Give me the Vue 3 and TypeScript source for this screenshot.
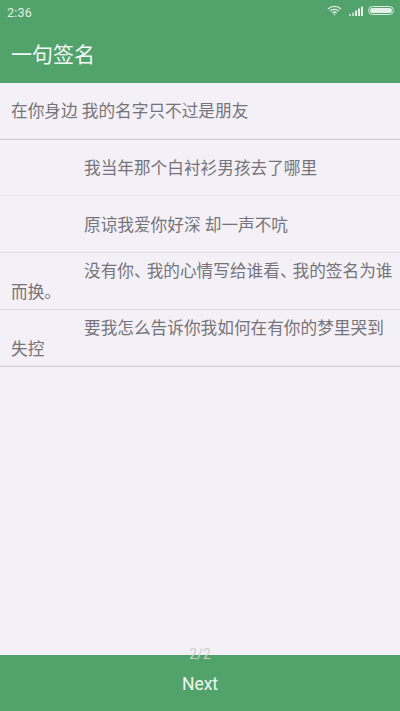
<script setup lang="ts">
interface Row { parts: string[]; indent: boolean; cls: string }
const rows: Row[] = [
  { parts: ['在你身边 我的名字只不过是朋友'], indent: false, cls: 'strong' },
  { parts: ['我当年那个白衬衫男孩去了哪里'], indent: true, cls: 'faint' },
  { parts: ['原谅我爱你好深 却一声不吭'], indent: true, cls: 'mid low' },
  { parts: ['没有你', '、', '我的心情写给谁看', '、', '我的签名为谁', '而换。'], indent: true, cls: 'mid' },
  { parts: ['要我怎么告诉你我如何在有你的梦里哭到失控'], indent: true, cls: 'strong' },
]
</script>

<template>
  <div class="page">
    <header class="head">
      <div class="status">
        <span class="time">2:36</span>
        <div class="icons">
          <svg width="15" height="11" viewBox="0 0 15 11" fill="none" stroke="#e4f1e8" stroke-width="1.3">
            <path d="M1 4 C4.5 0.6 10.5 0.6 14 4" />
            <path d="M3.2 6 C5.5 3.8 9.5 3.8 11.8 6" />
            <path d="M5.3 8 C6.5 6.9 8.5 6.9 9.7 8" />
            <circle cx="7.5" cy="9.6" r="0.8" fill="#e4f1e8" stroke="none" />
          </svg>
          <svg class="signal" width="14" height="10" viewBox="0 0 14 10" fill="#e4f1e8">
            <rect x="0" y="8" width="2" height="2" opacity=".7" />
            <rect x="3" y="6.5" width="2" height="3.5" opacity=".7" />
            <rect x="6" y="4.5" width="2" height="5.5" />
            <rect x="9" y="2.5" width="2" height="7.5" />
            <rect x="12" y="0.5" width="2" height="9.5" />
          </svg>
          <div class="battery"><div class="level"></div></div>
        </div>
      </div>
      <div class="title">一句签名</div>
    </header>

    <main class="list">
      <div v-for="(r, i) in rows" :key="i" class="row" :class="r.cls">
        <p class="line" :class="{ indent: r.indent }"><span v-for="(p, j) in r.parts" :key="j" :class="{ pause: p === '、' }">{{ p }}</span></p>
      </div>
    </main>

    <footer class="foot">
      <span class="pager">2/2</span>
      <span class="next">Next</span>
    </footer>
  </div>
</template>

<style scoped>
.page {
  width: 400px;
  height: 711px;
  display: flex;
  flex-direction: column;
  background: #f4f0f8;
  font-family: "Roboto", "Noto Sans CJK SC", sans-serif;
  overflow: hidden;
}
.head {
  height: 83px;
  background: #52a26c;
  color: #fff;
  display: flex;
  flex-direction: column;
  flex: none;
}
.status {
  height: 24px;
  padding: 0 6px 0 7px;
  display: flex;
  align-items: center;
  justify-content: space-between;
}
.time {
  font-size: 12.5px;
  color: #e4f1e8;
  letter-spacing: 0.2px;
}
.icons {
  display: flex;
  align-items: center;
  margin-top: -3px;
}
.signal {
  margin-left: 7px;
}
.battery {
  width: 26px;
  height: 9px;
  margin-left: 5px;
  border: 1px solid #dbeee1;
  border-radius: 5px;
  padding: 1px;
  box-sizing: border-box;
  display: flex;
}
.level {
  flex: 1;
  background: #e4f1e8;
  border-radius: 3px;
}
.title {
  flex: 1;
  padding: 0 0 1px 11px;
  display: flex;
  align-items: center;
  font-size: 21px;
  color: #f2f9f4;
}
.list {
  flex: 1;
  color: #767478;
}
.row {
  height: 57px;
  box-sizing: border-box;
  padding: 1px 6px 0 11px;
  display: flex;
  align-items: center;
  border-bottom: 1px solid #d4d2d6;
}
.row.strong {
  box-shadow: inset 0 -1px 0 #e6e3ea;
}
.row.faint {
  height: 56px;
  border-bottom-color: #e6e3ea;
}
.row.mid {
  border-bottom-color: #dedbe1;
}
.row.low {
  padding-top: 3px;
}
.line {
  margin: 0;
  width: 100%;
  font-size: 16.67px;
  line-height: 21px;
}
.indent {
  text-indent: 73px;
}
.pause {
  letter-spacing: -4px;
}
.foot {
  position: relative;
  height: 56px;
  flex: none;
  background: #52a26c;
  display: flex;
  align-items: center;
  justify-content: center;
}
.next {
  font-size: 17.5px;
  color: #f0f8f2;
  margin-top: 2px;
}
.pager {
  position: absolute;
  left: 0;
  right: 0;
  top: -9px;
  text-align: center;
  font-size: 14px;
  color: #c9d3cc;
}
</style>
